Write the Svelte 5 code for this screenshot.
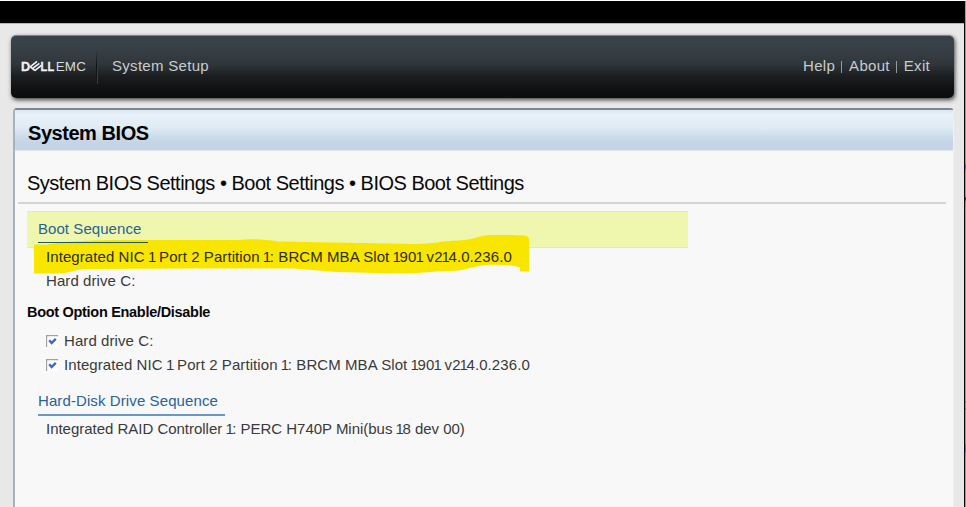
<script>
  const nic = 'Integrated NIC 1 Port 2 Partition 1: BRCM MBA Slot 1901 v214.0.236.0';
  const raid = 'Integrated RAID Controller 1: PERC H740P Mini(bus 18 dev 00)';
  const options = ['Hard drive C:', nic];
  const menu = ['Help', 'About', 'Exit'];
</script>

{#snippet label(text)}<span class="label">{#each text.split(/(1)/) as part}{#if part === '1'}<span class="one">1</span>{:else}{part}{/if}{/each}</span>{/snippet}

<div class="screen">
  <div class="setup">
    <div class="blackbar"></div>
    <header>
      <svg class="logo" width="68" height="20" viewBox="0 0 68 20">
        <g fill="#f2f3f3" font-family="Liberation Sans, Arial, sans-serif" font-size="13.4">
          <g font-weight="bold" stroke="#f2f3f3" stroke-width=".3">
            <text x="0" y="15" textLength="9.5" lengthAdjust="spacingAndGlyphs">D</text>
            <text x="19.5" y="15" textLength="14" lengthAdjust="spacingAndGlyphs">LL</text>
          </g>
          <text x="34.7" y="15" textLength="30.5" lengthAdjust="spacingAndGlyphs" fill="#d9dbdc">EMC</text>
        </g>
        <path d="M9.2 10.8L16 5.4M11.4 12.7L18.4 7.3M13.8 14.6L20.4 9.4M9.2 10.6L13.9 14.6" fill="none" stroke="#f2f3f3" stroke-width="1.6" />
      </svg>
      <i class="split"></i>
      <span class="product">System Setup</span>
      <nav>
        {#each menu as item, i}
          {#if i}<i></i>{/if}
          <span>{item}</span>
        {/each}
      </nav>
    </header>

    <main>
      <h1>System BIOS</h1>
      <h2>System BIOS Settings • Boot Settings • BIOS Boot Settings</h2>
      <section>
        <div class="selected"><span class="link">Boot Sequence</span></div>
        <div class="row first">{@render label(nic)}
          <svg class="marker" width="500" height="44" viewBox="0 0 500 44">
            <path d="M0 14.5H13C27 12 47 10.3 80 10H204C218 8.5 232 9.5 244 11.5L300 12.5L380 14C400 14 407 11 424 10.5C443 9.5 442 6 456 5H478C491 5.5 495 5 495 10V41.5H486V37.5C478 34.5 465 34.5 452 35C435 37 433 40.5 416 41C399 41 390 43.5 367 43.3H353L302 42L260 38.5H160L50 39C40 40 36 43 25 43.5H0Z" />
          </svg>
        </div>
        <div class="row">{@render label('Hard drive C:')}</div>
        <h3>Boot Option Enable/Disable</h3>
        {#each options as option}
          <div class="row option">
            <svg width="13" height="13" viewBox="0 0 13 13">
              <path d="M0 0H12V1.4H1.4V12H0Z" fill="#a0a0a0" />
              <path d="M1.4 1.4H11.5V12H1.4Z" fill="#fff" />
              <path d="M3.2 5.3L5.6 8L9.8 3.8" fill="none" stroke="#3f62d5" stroke-width="2.4" />
            </svg>
            {@render label(option)}
          </div>
        {/each}
        <div class="disk"><span class="link">Hard-Disk Drive Sequence</span></div>
        <div class="row raid">{@render label(raid)}</div>
      </section>
    </main>
  </div>
  <div class="edge"></div>
</div>

<style>
  .screen {
    display: flex;
    box-sizing: border-box;
    width: 966px;
    height: 507px;
    padding-top: 1px;
    overflow: hidden;
    background: #fff;
    font-family: "Liberation Sans", Arial, sans-serif;
    font-size: 15px;
    color: #3a3a3a;
  }
  .setup {
    display: flex;
    flex-direction: column;
    width: 964px;
    background: #e8e8e8;
  }
  .blackbar {
    height: 22px;
    flex: none;
    background: #000;
    border-bottom: 1px solid #b4b4b4;
  }
  .edge {
    width: 1px;
    border-left: 1px solid #080808;
    background: linear-gradient(#999 163px, #477994 164px, #477994 168px, #999 169px, #999 196px, #222 197px, #a98b5b 201px, #b09c7e 208px, #999 213px, #999 400px, #455ca8 401px, #999 402px, #999 407px, #455ca8 408px, #999 409px, #999 443px, #7568ad 444px, #7568ad 451px, #999 452px);
  }
  header {
    display: flex;
    align-items: center;
    flex: none;
    box-sizing: border-box;
    width: 943px;
    height: 63px;
    margin: 11px 0 0 11px;
    padding: 0 24px 0 10px;
    border-radius: 5px;
    background: linear-gradient(#39424a, #384047 20%, #30363b 45%, #1b1e20 65%, #101112 85%, #0b0c0d);
    border-top: 1px solid #78838b;
    box-shadow: 1px 2px 4px #444;
    color: #c9cbcc;
    letter-spacing: .3px;
  }
  .logo { flex: none; margin-top: -2px; }
  .split {
    width: 1px;
    height: 34px;
    margin: 0 14px 0 7px;
    background: linear-gradient(transparent, #0c0e10, transparent);
    border-right: 1px solid #343a40;
  }
  .product { margin-top: -3px; }
  nav {
    display: flex;
    align-items: center;
    margin: -4px 0 0 auto;
    gap: 6px;
  }
  nav i { width: 1px; height: 12px; margin: 3px 1px 0 0; background: #96999b; }
  main {
    flex: 1;
    box-sizing: border-box;
    width: 941px;
    margin: 10px 0 0 13px;
    background: #f8f8f8;
    border-left: 2px solid #a9b3bb;
    border-top: 2px solid #788891;
    border-right: 1px solid #f0f0f0;
    border-radius: 4px 4px 0 0;
  }
  h1 {
    margin: 0;
    height: 41px;
    padding-left: 13px;
    border-bottom: 1px solid #e2e7ec;
    box-sizing: border-box;
    background: linear-gradient(#dce7ef, #e8f1f9 12%, #dfebf4 45%, #cfdfec 62%, #c5d5e6 80%, #c5d4e5);
    font: bold 20px/47px "Liberation Sans", Arial, sans-serif;
    letter-spacing: -.45px;
    color: #000;
  }
  h2 {
    box-sizing: border-box;
    height: 53px;
    margin: 0 7px 0 3px;
    padding-left: 9px;
    border-bottom: 2px solid #d4d4d4;
    font: 20px/65px "Liberation Sans", Arial, sans-serif;
    letter-spacing: -.5px;
    color: #080808;
    white-space: nowrap;
  }
  section { padding: 7px 0 0 12px; }
  .selected {
    box-sizing: border-box;
    width: 661px;
    height: 37px;
    padding: 5px 0 0 11px;
    border: solid #e6eca0;
    border-width: 1px 0;
    background: #eff6ad;
  }
  .link {
    display: inline-block;
    position: relative;
    z-index: 2;
    box-sizing: border-box;
    height: 26px;
    padding-right: 7px;
    border-bottom: 1px solid #1d5a66;
    line-height: 24px;
    letter-spacing: .06px;
    color: #286296;
  }
  .row {
    display: flex;
    align-items: center;
    height: 24px;
    padding-left: 19px;
    line-height: 24px;
    letter-spacing: .08px;
    white-space: pre;
  }
  .label { position: relative; z-index: 1; }
  .first { position: relative; margin-top: -3px; color: #2f2c0a; }
  .marker {
    position: absolute;
    left: 7px;
    top: -15px;
    fill: #f8e600;
  }
  .one { margin: 0 -1.5px 0 -1px; }
  h3 {
    margin: 7px 0;
    font: bold 14.5px/24px "Liberation Sans", Arial, sans-serif;
    letter-spacing: -.3px;
    color: #080808;
    height: 22px;
  }
  .option { gap: 5px; }
  .disk { height: 27px; margin: 12px 0 0 11px; }
  .disk .link { border-color: #6b98c2; border-bottom-width: 2px; height: 27px; letter-spacing: .1px; }
  .raid { margin-top: 1px; letter-spacing: -.02px; }
</style>
